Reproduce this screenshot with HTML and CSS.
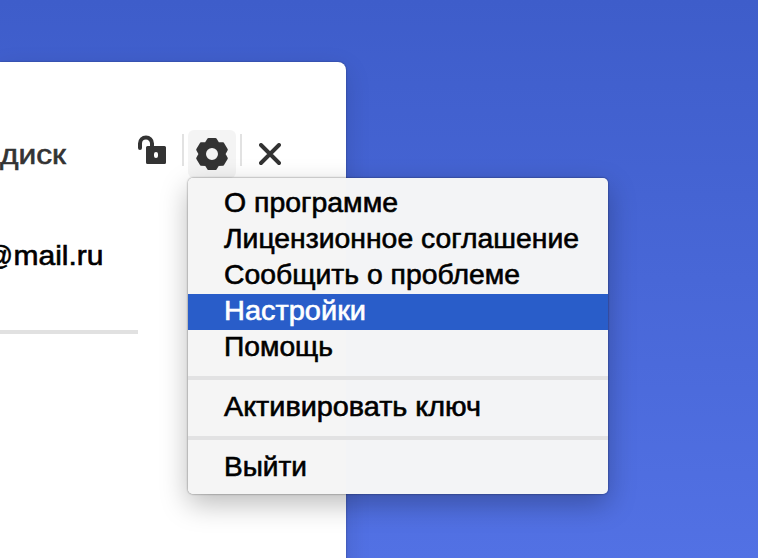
FILE: index.html
```html
<!DOCTYPE html>
<html lang="ru"><head><meta charset="utf-8"><title>Меню</title><link rel="stylesheet" href="styles.css"></head>
<body>
<main class="window">
<header class="toolbar">
<svg class="title" width="68" height="40"><text x="0" y="28" textLength="66" lengthAdjust="spacingAndGlyphs">диск</text></svg>
<svg class="lock" width="30" height="32" viewBox="0 0 30 32"><path d="M2 14V9.500a6 6 0 0 1 12 0V13" fill="none" stroke="#333" stroke-width="4" stroke-linecap="round"/><path fill="#333" fill-rule="evenodd" d="M9.500 12h17A1.500 1.500 0 0 1 28 13.500v15a1.500 1.500 0 0 1-1.500 1.500h-17A1.500 1.500 0 0 1 8 28.500v-15A1.500 1.500 0 0 1 9.500 12zM18 18a2 2 0 0 0-2 2v2a2 2 0 0 0 4 0v-2a2 2 0 0 0-2-2z"/></svg>
<i class="separator"></i>
<span class="settings"><svg width="34" height="34" viewBox="-17 -17 34 34"><path fill="#333" stroke="#333" stroke-width="2.400" stroke-linejoin="round" fill-rule="evenodd" d="M-3.500-14.800h7L6-10.900 11-10.500 14.600-4.400 12.300 0 14.600 4.400 11 10.500 6 10.900 3.500 14.800h-7L-6 10.900-11 10.500-14.600 4.400-12.300 0-14.600-4.400-11-10.500-6-10.900zM0-7.200a7.200 7.200 0 1 0 0 14.400 7.200 7.200 0 0 0 0-14.400z"/></svg></span>
<i class="separator"></i>
<svg class="close" width="22" height="22" viewBox="0 0 22 22"><path d="M2 2l18 18M20 2L2 20" stroke="#333" stroke-width="3.900" stroke-linecap="round"/></svg>
</header>
<svg class="email" width="138" height="40"><text x="-14" y="28" textLength="27" lengthAdjust="spacingAndGlyphs">@</text><text x="13.500" y="28" textLength="90" lengthAdjust="spacingAndGlyphs">mail.ru</text></svg>
<div class="rule"></div>
</main>
<nav class="menu">
<svg class="item"><text x="36" y="26" textLength="174" lengthAdjust="spacingAndGlyphs">О программе</text></svg>
<svg class="item"><text x="36" y="26" textLength="355" lengthAdjust="spacingAndGlyphs">Лицензионное соглашение</text></svg>
<svg class="item"><text x="36" y="26" textLength="296" lengthAdjust="spacingAndGlyphs">Сообщить о проблеме</text></svg>
<svg class="item active"><text x="36" y="26" textLength="142" lengthAdjust="spacingAndGlyphs">Настройки</text></svg>
<svg class="item"><text x="36" y="26" textLength="109" lengthAdjust="spacingAndGlyphs">Помощь</text></svg>
<div class="divider"></div>
<svg class="item"><text x="36" y="26" textLength="257" lengthAdjust="spacingAndGlyphs">Активировать ключ</text></svg>
<div class="divider"></div>
<svg class="item"><text x="36" y="26" textLength="83" lengthAdjust="spacingAndGlyphs">Выйти</text></svg>
</nav>
</body></html>
```
FILE: styles.css
```css
*{box-sizing:border-box}
body{margin:0;width:758px;height:558px;overflow:hidden;background:linear-gradient(#3e5dca,#5271e4);font-family:"Liberation Sans",sans-serif;font-size:28px;padding-top:62px}
svg{display:block;flex-shrink:0}
.window{width:346px;height:520px;background:#fff;border-radius:0 8px 0 0;box-shadow:0 0 2px #0006,0 8px 26px #0002;padding-top:68px}
.toolbar{display:flex;height:48px}
.title{margin-top:6px;fill:#333;color:#333}
.lock{margin:4px 14px 0 70px}
.separator{width:2px;height:32px;margin-top:4px;background:#e2e2e2}
.settings{width:48px;height:48px;margin:0 4px;padding:7px;border-radius:6px;background:#f4f4f4}
.close{margin:13px 0 0 17px}
.email{margin-top:59px}
.rule{width:138px;height:4px;margin-top:53px;background:#e1e1e1}
.menu{position:absolute;left:188px;top:178px;width:420px;height:316px;padding-top:8px;background:linear-gradient(90deg,#f5f5f5 158px,#f3f4f6 158px);border-radius:5px;box-shadow:0 0 2px #0009,0 10px 28px #0004}
.item{width:420px;height:36px}
.item text,.email text,.title text{stroke:currentColor;stroke-width:.6px}
.active{background:#295dc9;fill:#fff;color:#fff}
.divider{height:4px;margin:10px 0;background:#e2e2e3}
```
